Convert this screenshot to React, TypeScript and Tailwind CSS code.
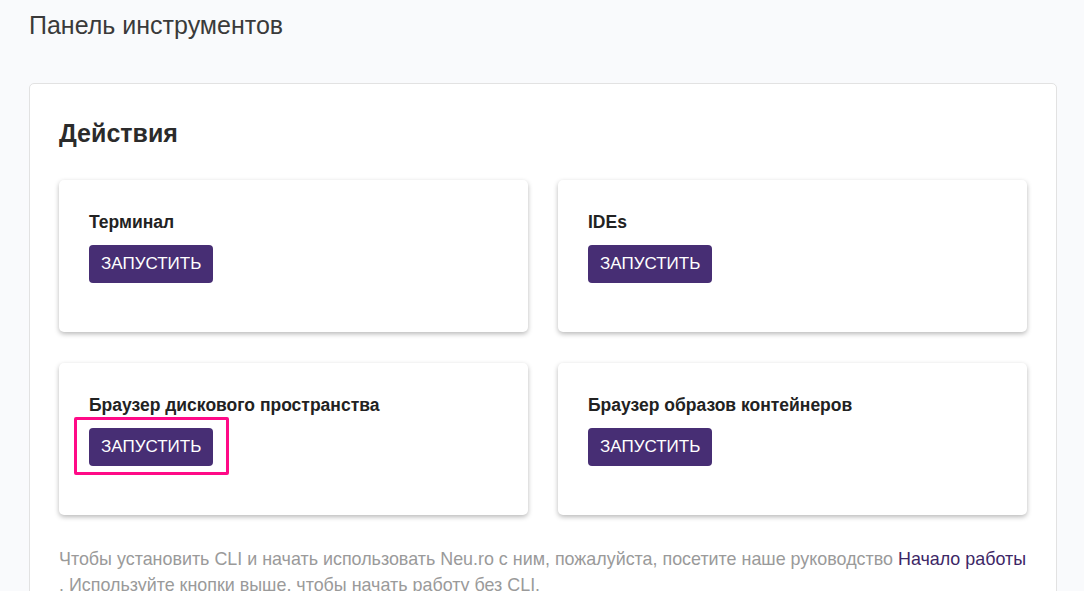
import React from "react";

const cards = [
  { title: "Терминал", highlight: false },
  { title: "IDEs", highlight: false },
  { title: "Браузер дискового пространства", highlight: true },
  { title: "Браузер образов контейнеров", highlight: false },
];

export default function App() {
  return (
    <div
      className="min-h-screen bg-[#f9fafc] px-[29px] pt-[11px] text-[#333]"
      style={{ fontFamily: '"Liberation Sans", Arial, sans-serif' }}
    >
      <h1 className="text-[25px] leading-[29px] font-normal text-[#3a3a3a]">Панель инструментов</h1>
      <div className="mt-[43px] w-[1028px] rounded-[5px] border border-[#e2e2e2] bg-white px-[29px] pt-[35px] pb-[20px]">
        <h2 className="text-[25px] leading-[29px] font-bold text-[#2b2b2b]">Действия</h2>
        <div className="mt-[32px] grid grid-cols-2 gap-x-[30px] gap-y-[31px]">
          {cards.map((c) => (
            <div
              key={c.title}
              className="h-[152px] rounded-[5px] bg-white px-[30px] pt-[32px] shadow-[0_2px_5px_rgba(0,0,0,0.28)]"
            >
              <div className="text-[17.5px] leading-[20px] font-bold text-[#222]">{c.title}</div>
              <div className="relative mt-[13px] inline-block">
                <button className="h-[38px] rounded-[4px] bg-[#472e74] px-[12px] text-[17px] uppercase text-white">
                  Запустить
                </button>
                {c.highlight && (
                  <div className="absolute -left-[15px] -top-[11px] h-[58px] w-[155px] rounded-[2px] border-[3px] border-[#ff0a87]" />
                )}
              </div>
            </div>
          ))}
        </div>
        <p className="mt-[31px] whitespace-nowrap text-[17.9px] leading-[26px] text-[#9a9a9a]">
          Чтобы установить CLI и начать использовать Neu.ro с ним, пожалуйста, посетите наше руководство{" "}
          <a className="text-[#3d2766]">Начало работы</a>
          <br />. Используйте кнопки выше, чтобы начать работу без CLI.
        </p>
      </div>
    </div>
  );
}
